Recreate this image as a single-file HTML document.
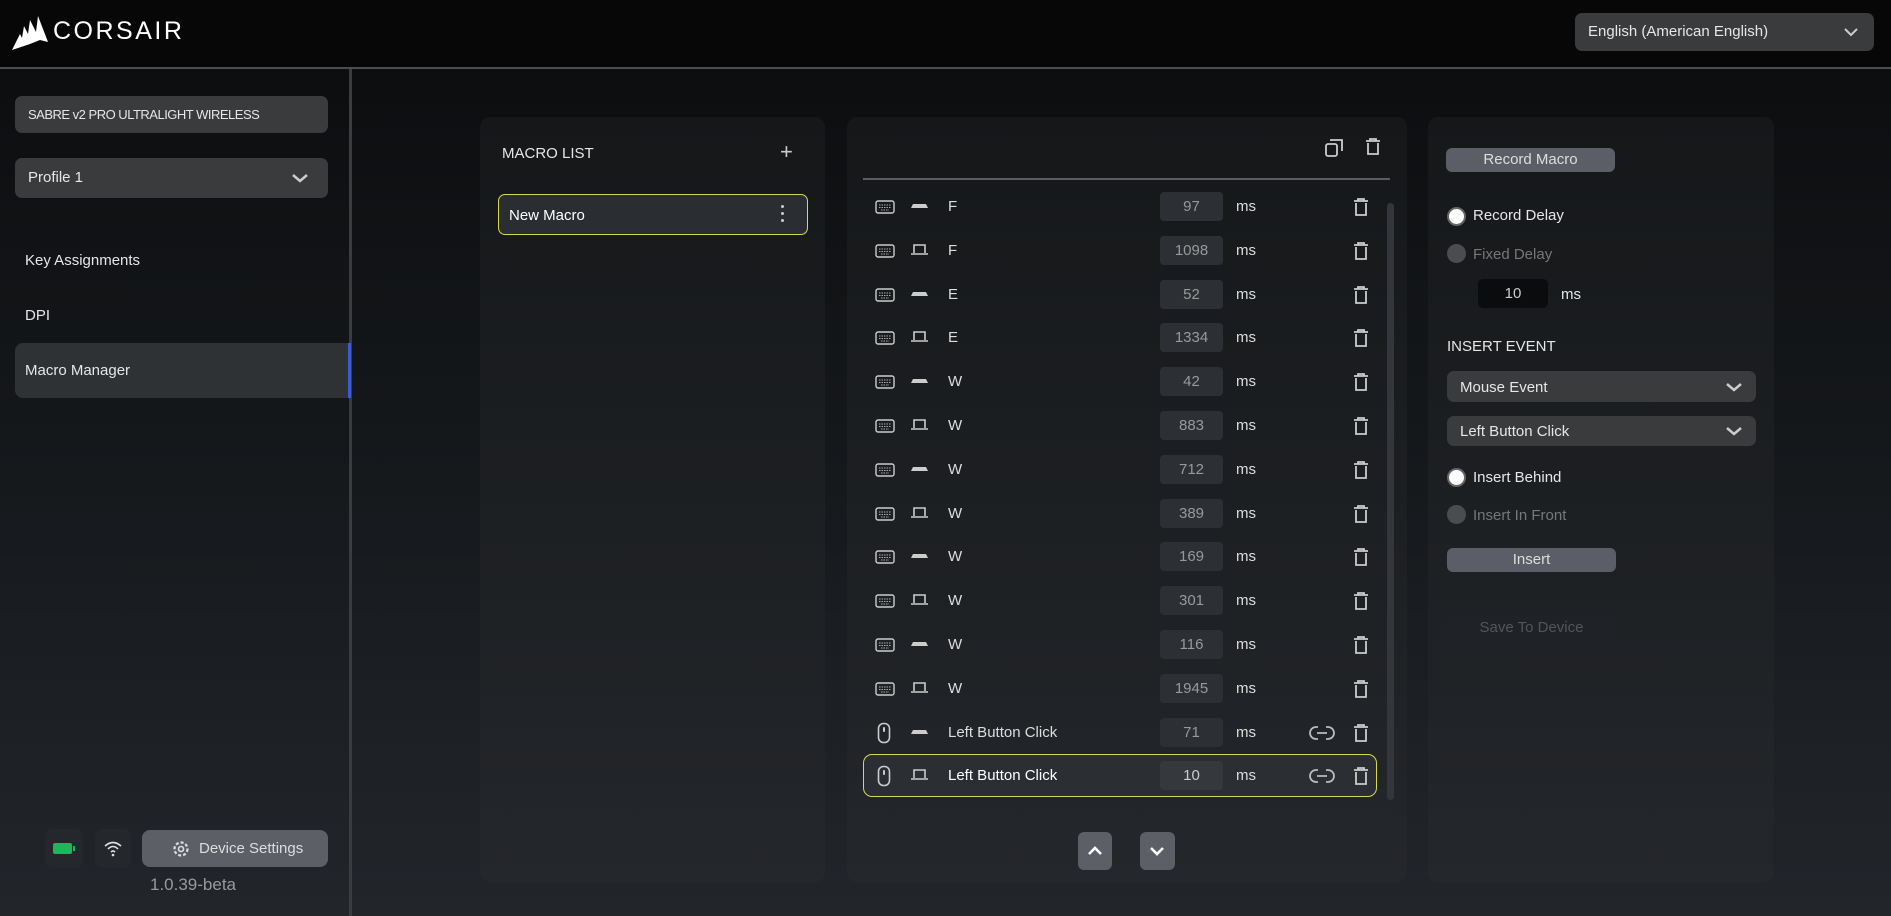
<!DOCTYPE html>
<html><head><meta charset="utf-8"><style>
*{box-sizing:border-box;margin:0;padding:0}
body{width:1891px;height:916px;overflow:hidden;font-family:"Liberation Sans",sans-serif;color:#e6e6e6;background:linear-gradient(#0a0b0c 0px,#0d0e10 80px,#15181b 450px,#22262b 916px);position:relative}
.a{position:absolute}
.hdr{left:0;top:0;width:1891px;height:69px;background:#070707;border-bottom:2px solid #4a4c4f}
.side{left:349px;top:69px;width:3px;height:847px;background:#3a3c40}
.box{border-radius:7px;background:#3a3b3d}
.panel{border-radius:10px;background:linear-gradient(#151719,#24272b)}
.row{left:863px;width:514px;height:43px}
.row .t{position:absolute;left:85px;top:13px;font-size:15px;color:#ddd}
.row .d{position:absolute;left:297px;top:7px;width:63px;height:29px;border-radius:4px;background:#2c2f33;color:#999;font-size:15px;text-align:center;line-height:29px}
.row .ms{position:absolute;left:373px;top:13px;font-size:15px;color:#ddd}
.radio{width:19px;height:19px;border-radius:50%}
.btn{border-radius:6px;background:#5b5e66;color:#ddd;text-align:center;font-size:15px}
</style></head><body>
<div class="a hdr"></div>
<svg class="a" style="left:10px;top:12px" width="40" height="40" viewBox="0 0 40 40"><path d="M2 38 L10 22 L12 26 L14 14 L18 22 L20 8 L26 20 L28 4 L38 30 L30 28 L20 32 Z" fill="#fff"/></svg>
<div class="a" style="left:53px;top:17px;font-size:25px;letter-spacing:2.5px;color:#fff">CORSAIR</div>
<div class="a box" style="left:1575px;top:13px;width:299px;height:38px;background:#3a3b3d"><span class="a" style="left:13px;top:10px;font-size:15px">English (American English)</span><svg class="a" style="left:268px;top:13px" width="16" height="12"><path d="M2 3 L8 9 L14 3" stroke="#ccc" stroke-width="2" fill="none"/></svg></div>
<div class="a side"></div>
<div class="a box" style="left:15px;top:96px;width:313px;height:37px"><span class="a" style="left:13px;top:11px;font-size:13px;letter-spacing:-.5px">SABRE v2 PRO ULTRALIGHT WIRELESS</span></div>
<div class="a box" style="left:15px;top:158px;width:313px;height:40px"><span class="a" style="left:13px;top:11px;font-size:15px">Profile 1</span><svg class="a" style="left:276px;top:14px" width="18" height="12"><path d="M2 3 L9 9 L16 3" stroke="#ccc" stroke-width="2.5" fill="none"/></svg></div>
<div class="a" style="left:25px;top:252px;font-size:15px">Key Assignments</div>
<div class="a" style="left:25px;top:307px;font-size:15px">DPI</div>
<div class="a" style="left:15px;top:343px;width:334px;height:55px;background:#2f3235;border-radius:8px 0 0 8px"><span class="a" style="left:10px;top:19px;font-size:15px">Macro Manager</span></div>
<div class="a" style="left:348px;top:343px;width:3px;height:55px;background:#3b5bdb"></div>
<div class="a" style="left:45px;top:829px;width:38px;height:39px;border-radius:8px;background:#24272b"><div class="a" style="left:8px;top:14px;width:19px;height:11px;background:#1fb55a;border-radius:2px"></div><div class="a" style="left:28px;top:17px;width:2px;height:5px;background:#1fb55a"></div></div>
<div class="a" style="left:95px;top:829px;width:36px;height:39px;border-radius:8px;background:#24272b"><svg class="a" style="left:8px;top:10px" width="20" height="18"><path d="M2 7 Q10 0 18 7 M5 10 Q10 5 15 10 M8 13 Q10 11 12 13" stroke="#ddd" stroke-width="1.6" fill="none"/><circle cx="10" cy="16" r="1.3" fill="#ddd"/></svg></div>
<div class="a btn" style="left:142px;top:830px;width:186px;height:37px;border-radius:8px;background:#5c5f66"><svg class="a" style="left:29px;top:9px" width="20" height="20" viewBox="0 0 20 20"><circle cx="10" cy="10" r="6.5" stroke="#ddd" stroke-width="2.2" fill="none" stroke-dasharray="3 2"/><circle cx="10" cy="10" r="2.5" stroke="#ddd" stroke-width="1.6" fill="none"/></svg><span class="a" style="left:57px;top:10px;font-size:15px">Device Settings</span></div>
<div class="a" style="left:150px;top:875px;font-size:17px;color:#999">1.0.39-beta</div>

<div class="a panel" style="left:480px;top:117px;width:345px;height:765px"></div>
<div class="a" style="left:502px;top:145px;font-size:15px">MACRO LIST</div>
<div class="a" style="left:780px;top:139px;font-size:22px;color:#ccc">+</div>
<div class="a" style="left:498px;top:194px;width:310px;height:41px;border:1.5px solid #d8d94a;border-radius:7px;background:#2a2d31"><span class="a" style="left:10px;top:12px;font-size:15px;color:#fff">New Macro</span><div class="a" style="left:282px;top:10px;width:3px;height:3px;background:#ccc;border-radius:50%;box-shadow:0 7px #ccc,0 14px #ccc"></div></div>

<div class="a panel" style="left:847px;top:117px;width:560px;height:765px"></div>
<svg class="a" style="left:1324px;top:137px" width="22" height="22"><rect x="2" y="7" width="11" height="12" rx="2" stroke="#ccc" stroke-width="1.8" fill="none"/><path d="M7 4 V3 H18 V14" stroke="#ccc" stroke-width="1.8" fill="none"/></svg>
<svg class="a" style="left:1364px;top:137px" width="18" height="20"><path d="M2 4 H16 M6 4 V2 H12 V4 M4 6 V17 H14 V6" stroke="#ccc" stroke-width="1.8" fill="none"/></svg>
<div class="a" style="left:863px;top:178px;width:527px;height:2px;background:#5a5c60"></div>
<div class="a" style="left:1387px;top:203px;width:7px;height:597px;border-radius:4px;background:#33363a"></div>
<div class="a row" style="top:754px;border:1.5px solid #d8d94a;border-radius:9px;background:#2b2e33"></div>
<div id="rows"></div>
<div class="a" style="left:1078px;top:832px;width:34px;height:38px;border-radius:6px;background:#5c5f66"><svg class="a" style="left:9px;top:13px" width="16" height="12"><path d="M2 9 L8 3 L14 9" stroke="#fff" stroke-width="2.6" fill="none"/></svg></div>
<div class="a" style="left:1140px;top:832px;width:35px;height:38px;border-radius:6px;background:#5c5f66"><svg class="a" style="left:9px;top:13px" width="16" height="12"><path d="M2 3 L8 9 L14 3" stroke="#fff" stroke-width="2.6" fill="none"/></svg></div>

<div class="a panel" style="left:1428px;top:117px;width:346px;height:765px"></div>
<div class="a btn" style="left:1446px;top:148px;width:169px;height:24px;line-height:24px">Record Macro</div>
<div class="a radio" style="left:1447px;top:207px;background:#fff;border:2px solid #666"></div>
<div class="a" style="left:1473px;top:207px;font-size:15px">Record Delay</div>
<div class="a radio" style="left:1447px;top:244px;background:#4a4c50"></div>
<div class="a" style="left:1473px;top:246px;font-size:15px;color:#777">Fixed Delay</div>
<div class="a" style="left:1478px;top:279px;width:70px;height:29px;border-radius:5px;background:#0b0c0d;color:#ccc;text-align:center;line-height:29px;font-size:15px">10</div>
<div class="a" style="left:1561px;top:286px;font-size:15px">ms</div>
<div class="a" style="left:1447px;top:338px;font-size:15px">INSERT EVENT</div>
<div class="a box" style="left:1447px;top:371px;width:309px;height:31px"><span class="a" style="left:13px;top:8px;font-size:15px">Mouse Event</span><svg class="a" style="left:278px;top:10px" width="18" height="12"><path d="M2 3 L9 9 L16 3" stroke="#ccc" stroke-width="2.5" fill="none"/></svg></div>
<div class="a box" style="left:1447px;top:416px;width:309px;height:30px"><span class="a" style="left:13px;top:7px;font-size:15px">Left Button Click</span><svg class="a" style="left:278px;top:9px" width="18" height="12"><path d="M2 3 L9 9 L16 3" stroke="#ccc" stroke-width="2.5" fill="none"/></svg></div>
<div class="a radio" style="left:1447px;top:468px;background:#fff;border:2px solid #666"></div>
<div class="a" style="left:1473px;top:469px;font-size:15px">Insert Behind</div>
<div class="a radio" style="left:1447px;top:505px;background:#4a4c50"></div>
<div class="a" style="left:1473px;top:507px;font-size:15px;color:#777">Insert In Front</div>
<div class="a btn" style="left:1447px;top:548px;width:169px;height:24px;line-height:24px">Insert</div>
<div class="a btn" style="left:1447px;top:616px;width:169px;height:24px;line-height:24px;background:#1f2226;color:#555">Save To Device</div>
<script>
var d=[["F",97,1],["F",1098,0],["E",52,1],["E",1334,0],["W",42,1],["W",883,0],["W",712,1],["W",389,0],["W",169,1],["W",301,0],["W",116,1],["W",1945,0],["Left Button Click",71,1],["Left Button Click",10,0]];
var h="";
d.forEach(function(r,i){var y=185+i*43.8;var m=i>=12;
var ic=m?'<svg class="a" style="left:14px;top:11px" width="14" height="22"><rect x="1.5" y="1.5" width="11" height="19" rx="5" stroke="#ccc" stroke-width="1.6" fill="none"/><rect x="6" y="5" width="2" height="5" rx="1" fill="#ccc"/></svg>'
:'<svg class="a" style="left:12px;top:15px" width="20" height="14"><rect x="1" y="1" width="18" height="12" rx="2" stroke="#ccc" stroke-width="1.4" fill="none"/><path d="M4 5 H16 M4 7.5 H16 M6 10 H14" stroke="#aaa" stroke-width="1" stroke-dasharray="1.5 1"/></svg>';
var pr=r[2]?'<svg class="a" style="left:47px;top:16px" width="20" height="10"><path d="M3 3 H16 L18 7 H1 Z" fill="#ccc"/></svg>':'<svg class="a" style="left:47px;top:13px" width="20" height="14"><path d="M4 11 V3 H15 V11 M1 12 H18" stroke="#ccc" stroke-width="1.6" fill="none"/></svg>';
h+='<div class="a row" style="top:'+y+'px">'+ic+pr+'<span class="t"'+(i==13?' style="color:#fff"':'')+'>'+r[0]+'</span><span class="d"'+(i==13?' style="color:#ccc;background:#35383d"':'')+'>'+r[1]+'</span><span class="ms">ms</span>'+(m?'<svg class="a" style="left:446px;top:13px" width="26" height="18"><path d="M9 3 H7 A6 6 0 0 0 7 15 H9 M17 3 H19 A6 6 0 0 1 19 15 H17 M8 9 H18" stroke="#bbb" stroke-width="1.8" fill="none"/></svg>':'')+'<svg class="a" style="left:490px;top:12px" width="16" height="20"><path d="M1 4 H15 M5 4 V2 H11 V4 M3 6 V18 H13 V6" stroke="#ccc" stroke-width="1.8" fill="none"/></svg></div>';});
document.getElementById("rows").innerHTML=h;
</script>
</body></html>
